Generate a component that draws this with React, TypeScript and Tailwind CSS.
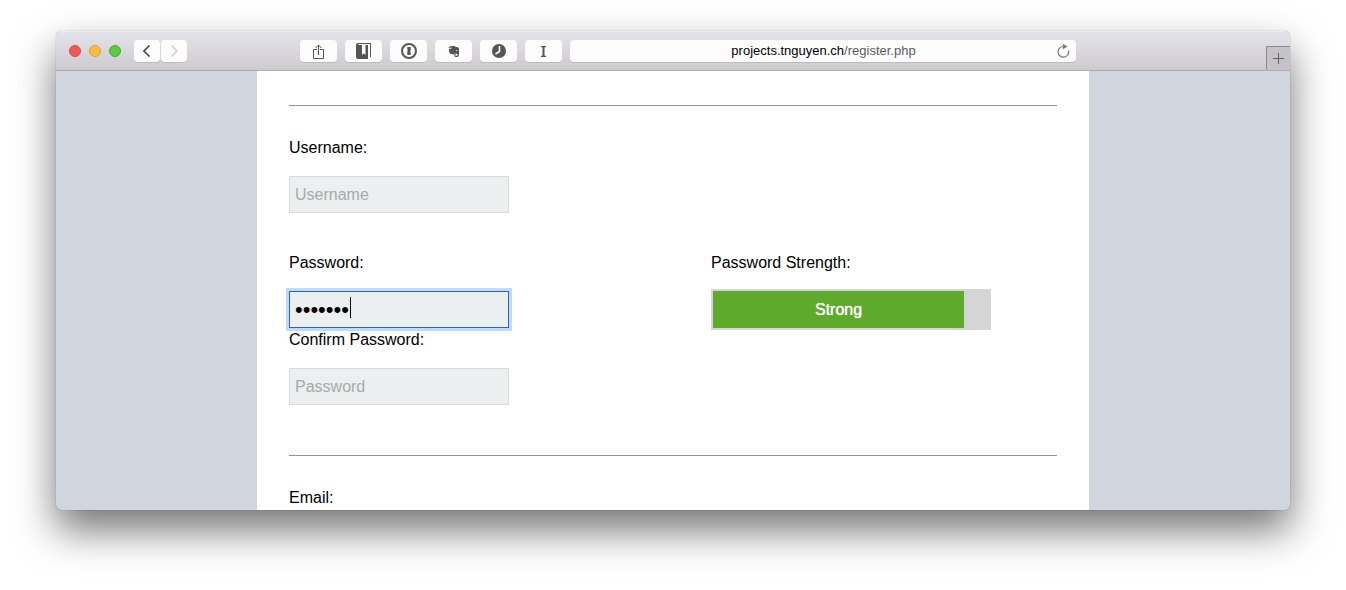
import { useState, type ReactNode } from "react";

function ToolButton({ label, children }: { label: string; children: ReactNode }) {
  return (
    <button
      type="button"
      aria-label={label}
      className="flex h-[22px] w-[37px] items-center justify-center rounded bg-[#fcfcfc] text-[#555555] shadow-[0_1px_0_#bdbbc0]"
    >
      {children}
    </button>
  );
}

function Toolbar() {
  return (
    <header className="flex h-10 items-center border-t border-b border-t-[#ededef] border-b-[#b0aeb3] bg-linear-to-b from-[#e4e3e9] to-[#cdcbd0] pl-[13px]">
      <div className="flex gap-2">
        <button type="button" aria-label="Close" className="size-3 rounded-full border border-[#de4643] bg-[#ee5b54]" />
        <button type="button" aria-label="Minimize" className="size-3 rounded-full border border-[#dfa032] bg-[#f6bd3e]" />
        <button type="button" aria-label="Zoom" className="size-3 rounded-full border border-[#47ab2e] bg-[#5fc93f]" />
      </div>
      <nav className="ml-[13px] flex gap-px">
        <button type="button" aria-label="Back" className="flex h-[22px] w-[26px] items-center justify-center rounded bg-[#fcfcfc] shadow-[0_1px_0_#bdbbc0]">
          <svg width="8" height="12" viewBox="0 0 8 12" fill="none" stroke="#4a4a4a" strokeWidth="1.6"><path d="M6.500.5 1 6l5.500 5.500" /></svg>
        </button>
        <button type="button" aria-label="Forward" className="flex h-[22px] w-[26px] items-center justify-center rounded bg-[#fcfcfc] shadow-[0_1px_0_#bdbbc0]">
          <svg width="8" height="12" viewBox="0 0 8 12" fill="none" stroke="#d2d2d2" strokeWidth="1.6"><path d="M1.500.5 7 6l-5.500 5.500" /></svg>
        </button>
      </nav>
      <div className="ml-[113px] flex gap-2">
        <ToolButton label="Share">
          <svg width="11" height="15" viewBox="0 0 11 15" fill="none" stroke="currentColor"><path d="M4 5.500H.5v9h10v-9H7M5.500 11V1M2.500 4l3-3 3 3" /></svg>
        </ToolButton>
        <ToolButton label="Save page">
          <svg width="15" height="16" viewBox="0 0 15 16"><path fill="currentColor" d="M2 0h13v14h-1V1H2.500v1H12v14H2a2 2 0 0 1-2-2V2a2 2 0 0 1 2-2Z" /><path fill="#fcfcfc" d="M6 2h3.500v10l-1.700-1.700L6 12Z" /></svg>
        </ToolButton>
        <ToolButton label="Password manager">
          <svg width="16" height="16" viewBox="0 0 16 16"><circle cx="8" cy="8" r="7" fill="none" stroke="currentColor" strokeWidth="2" /><path fill="currentColor" d="M6.300 4h3.400v4l-.8.8.8.8V12H6.300V8l.8-.8-.8-.8Z" /></svg>
        </ToolButton>
        <ToolButton label="Clip note">
          <svg width="12" height="13" viewBox="0 0 12 14" fill="currentColor"><path d="M3 1h3.500l1 1 2.500.4c.9.2 1.200.7 1.300 1.600.3 2.500.2 5-.1 7C11 12.500 10 13 8.500 13S6.300 12 6.300 11s.7-1.700 1.700-1.700v1c-1 0-.9 1.500.5 1.500.9 0 1.300-.6 1.300-1.800-.6-.7-1.800-1-2.800-.9-.2.900-.7 1.100-1.500 1.100-1.300 0-2.700-.2-3.500-.7C1 8.500.5 6 .5 4H3Z" /><path d="M2.500.5v2.800H0Z" /><circle cx="9" cy="6" r=".7" fill="#fcfcfc" /></svg>
        </ToolButton>
        <ToolButton label="Read later">
          <svg width="14" height="14" viewBox="0 0 14 14"><circle cx="7" cy="7" r="7" fill="currentColor" /><path d="M7.500 2v5.500L3.500 10" fill="none" stroke="#fcfcfc" strokeWidth="1.600" /></svg>
        </ToolButton>
        <ToolButton label="Text view">
          <svg width="5" height="11" viewBox="0 0 5 11" fill="currentColor"><path d="M0 0h5v1.200H3.500v8.600H5V11H0V9.800h1.500V1.200H0Z" /></svg>
        </ToolButton>
      </div>
      <div className="ml-2 flex h-[22px] min-w-0 flex-1 items-center rounded bg-[#fcfcfc] pr-1.5 pl-5 text-[13px] shadow-[0_1px_0_#bdbbc0]">
        <p className="flex-1 truncate text-center text-black">
          projects.tnguyen.ch<span className="text-[#5d5d5d]">/register.php</span>
        </p>
        <button type="button" aria-label="Reload">
          <svg width="13" height="14" viewBox="0 0 13 14"><path d="M11.500 6.500A5.300 5.300 0 1 1 6.500 2.500" fill="none" stroke="#777" strokeWidth="1.200" /><path fill="#777" d="m6 0 4.500 2.600L6 5.200Z" /></svg>
        </button>
      </div>
      <button
        type="button"
        aria-label="New tab"
        className="ml-[190px] flex h-6 w-6 items-center justify-center self-end border-t border-l border-[#8a898d] bg-[#c5c3c8]"
      >
        <svg width="11" height="11" viewBox="0 0 11 11" stroke="#626166"><path d="M5.500 0v11M0 5.500h11" /></svg>
      </button>
    </header>
  );
}

const field =
  "block h-[37px] w-[220px] rounded-none border border-[#d5dbdb] bg-[#ebefef] px-[5px] text-base text-black outline-none placeholder:text-[#a9a9a9]";

function RegisterForm() {
  const [password, setPassword] = useState("secret7");
  return (
    <form className="mx-auto w-[832px] max-w-full bg-white px-8 pt-[34px] pb-px text-base leading-[22px] text-black">
      <hr className="border-[#8f9494]" />
      <div className="mt-[31px]">
        <label htmlFor="username" className="mb-[17px] block">Username:</label>
        <input id="username" type="text" placeholder="Username" className={field} />
      </div>
      <div className="mt-[39px] flex">
        <div className="w-[422px]">
          <label htmlFor="password" className="mb-[17px] block">Password:</label>
          <div className="relative w-[220px]">
            <input
              id="password"
              type="password"
              value={password}
              onChange={(event) => setPassword(event.target.value)}
              className="block h-[37px] w-[220px] rounded-none border border-[#2f63b5] bg-[#ebefef] px-[5px] text-[22px] text-black caret-transparent shadow-[0_0_0_3px_#bbdcfd] outline-none"
            />
            <span className="absolute top-1.5 left-[61px] h-[21px] w-px bg-black" />
          </div>
          <label htmlFor="confirm" className="mt-px mb-[17px] block">Confirm Password:</label>
          <input id="confirm" type="password" placeholder="Password" className={field} />
        </div>
        <div className="w-[280px]">
          <p className="mb-[15px]">Password Strength:</p>
          <div className="h-[41px] border-2 border-[#d5d5d5] bg-[#d5d5d5]">
            <div className="flex h-full w-[91%] items-center justify-center bg-[#5eaa2a] text-white text-shadow-[0_0_1px_#ffffff]">
              Strong
            </div>
          </div>
        </div>
      </div>
      <hr className="mt-[50px] border-[#8f9494]" />
      <p className="mt-[31px]">
        Email:
      </p>
    </form>
  );
}

export default function App() {
  return (
    <div className="overflow-hidden bg-white px-14 pt-[31px] pb-20 font-['Liberation_Sans',Arial,sans-serif]">
      <main className="overflow-hidden rounded-[5px] bg-[#d1d5de] shadow-[0_0_1px_rgba(0,0,0,0.5),0_20px_40px_rgba(0,0,0,0.55)]">
        <Toolbar />
        <RegisterForm />
      </main>
    </div>
  );
}
